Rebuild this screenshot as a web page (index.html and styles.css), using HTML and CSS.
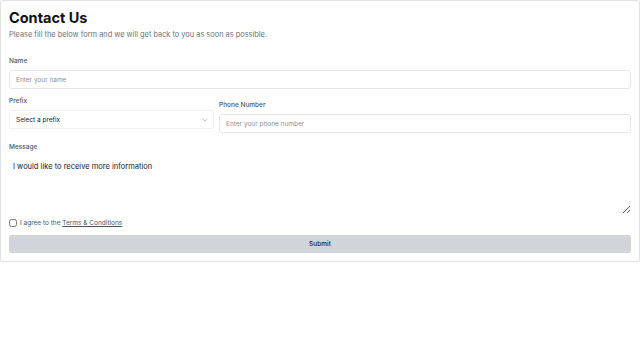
FILE: index.html
```html
<!DOCTYPE html>
<html lang="en">
  <head>
    <meta charset="UTF-8" />
    <meta name="viewport" content="width=device-width, initial-scale=1.0" />
    <title>Contact Us</title>
    <link rel="stylesheet" href="styles.css">
  </head>
  <body>
    <div class="contact-card">
      <h1 class="contact-title">Contact Us</h1>
      <p class="contact-subtitle">Please fill the below form and we will get back to you as soon as possible.</p>

      <form class="contact-form">
        <div class="field">
          <label class="label" for="name">Name</label>
          <input id="name" class="input" type="text" placeholder="Enter your name" />
        </div>

        <div class="field-row">
          <div class="field prefix-field">
            <label class="label" for="prefix">Prefix</label>
            <div class="select-wrap">
              <select id="prefix" class="input select">
                <option>Select a prefix</option>
              </select>
              <svg class="chevron" width="6" height="4" viewBox="0 0 6 4">
                <path d="M0.6 0.8 L3 3.1 L5.4 0.8" fill="none" stroke="#8b909a" stroke-width="0.6" />
              </svg>
            </div>
          </div>
          <div class="field phone-field">
            <label class="label" for="phone">Phone Number</label>
            <input id="phone" class="input" type="text" placeholder="Enter your phone number" />
          </div>
        </div>

        <div class="field">
          <label class="label" for="message">Message</label>
          <textarea id="message" class="textarea">I would like to receive more information</textarea>
        </div>

        <label class="agree">
          <input type="checkbox" class="checkbox" />
          <span>I agree to the <a href="#" class="terms">Terms &amp; Conditions</a></span>
        </label>

        <button type="button" class="submit-btn">Submit</button>
      </form>
    </div>
  </body>
</html>
```

FILE: styles.css
```css
* {
  margin: 0;
  padding: 0;
  box-sizing: border-box;
}

body {
  font-family: Inter, "Noto Sans", sans-serif;
  background-color: #ffffff;
  color: #111827;
}

.contact-card {
  width: 640px;
  border: 1px solid #e2e2e2;
  border-radius: 3px;
  box-shadow: 0 1px 3px rgba(0, 0, 0, 0.12);
  padding: 7px 8px 8px 8px;
}

.contact-title {
  font-size: 14.5px;
  font-weight: 700;
  line-height: 20px;
  color: #111111;
}

.contact-subtitle {
  font-size: 7.4px;
  line-height: 12px;
  color: #6b7280;
  margin-top: 1px;
}

.contact-form {
  margin-top: 16px;
}

.field {
  display: flex;
  flex-direction: column;
}

.label {
  font-size: 6.5px;
  font-weight: 500;
  line-height: 9px;
  color: #4b5563;
  margin-bottom: 4px;
}

.input {
  display: block;
  height: 19px;
  width: 100%;
  border: 1px solid #e5e7eb;
  border-radius: 3px;
  background: #ffffff;
  padding: 0 6px;
  font-family: inherit;
  font-size: 6.5px;
  color: #111827;
  outline: none;
}

.input::placeholder {
  color: #8b909a;
}

.field-row {
  display: flex;
  gap: 5px;
  margin-top: 8px;
}

.prefix-field {
  width: 205px;
}

.phone-field {
  flex: 1;
  margin-top: 4px;
}

.select-wrap {
  position: relative;
}

.select {
  appearance: none;
  -webkit-appearance: none;
  border-color: #f0f1f3;
}

.chevron {
  position: absolute;
  right: 6px;
  top: 8px;
}

.field-row + .field {
  margin-top: 10px;
}

.textarea {
  display: block;
  height: 58px;
  width: 100%;
  border: none;
  padding: 5px 4px;
  font-family: inherit;
  font-size: 7.5px;
  line-height: 12px;
  color: #111827;
  resize: vertical;
  outline: none;
}

.agree {
  display: flex;
  align-items: center;
  gap: 3px;
  margin-top: 5px;
  font-size: 6.5px;
  color: #4b5563;
}

.checkbox {
  width: 8px;
  height: 8px;
  margin: 0;
}

.terms {
  color: #4b5563;
  text-decoration: underline;
}

.submit-btn {
  display: block;
  width: 100%;
  height: 18px;
  margin-top: 8px;
  border: none;
  border-radius: 3px;
  background-color: #d1d5db;
  font-family: inherit;
  font-size: 6.5px;
  font-weight: 500;
  color: #111827;
}
```
